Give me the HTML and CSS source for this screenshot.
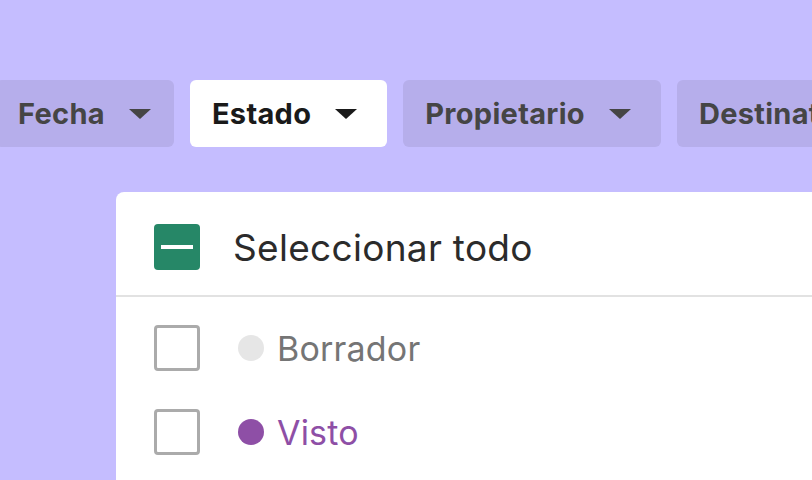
FILE: index.html
```html
<!DOCTYPE html>
<html lang="es">
<head>
<meta charset="utf-8">
<link rel="stylesheet" href="styles.css">
</head>
<body>
<div class="page">
  <div class="tabs">
    <div class="tab tab-first">Fecha<span class="caret"></span></div>
    <div class="tab active">Estado<span class="caret"></span></div>
    <div class="tab">Propietario<span class="caret"></span></div>
    <div class="tab">Destinatario<span class="caret"></span></div>
  </div>
  <div class="panel">
    <div class="head-row">
      <span class="check mixed"><span class="bar"></span></span>
      <span class="head-label">Seleccionar todo</span>
    </div>
    <div class="list">
      <div class="row">
        <span class="check"></span>
        <span class="dot draft"></span>
        <span class="label draft-text">Borrador</span>
      </div>
      <div class="row">
        <span class="check"></span>
        <span class="dot seen"></span>
        <span class="label seen-text">Visto</span>
      </div>
    </div>
  </div>
</div>
</body>
</html>
```
FILE: styles.css
```css
html, body {
  margin: 0;
  padding: 0;
}
body {
  width: 812px;
  height: 480px;
  overflow: hidden;
  background: #c5bdff;
  font-family: Inter, "Noto Sans", sans-serif;
}
.page {
  padding-top: 80px;
}
.tabs {
  display: flex;
  gap: 16px;
  margin-left: -4px;
  white-space: nowrap;
}
.tab {
  flex: none;
  display: flex;
  align-items: center;
  gap: 24px;
  height: 67px;
  box-sizing: border-box;
  padding: 0 30px 0 22px;
  border-radius: 6px;
  background: #b6aeeb;
  color: #454545;
  font-weight: 700;
  font-size: 29px;
  letter-spacing: 0.3px;
}
.tab-first {
  padding-right: 23px;
}
.tab.active {
  background: #ffffff;
  color: #1a1a1a;
}
.caret {
  width: 0;
  height: 0;
  border-left: 11px solid transparent;
  border-right: 11px solid transparent;
  border-top: 10px solid currentColor;
  margin-top: 1px;
}
.panel {
  margin-top: 45px;
  margin-left: 116px;
  width: 800px;
  height: 400px;
  background: #ffffff;
  border-radius: 8px 0 0 0;
}
.head-row {
  display: flex;
  align-items: center;
  gap: 33px;
  padding: 32px 0 25px 38px;
  border-bottom: 2px solid #e2e2e2;
}
.check {
  flex: none;
  width: 46px;
  height: 46px;
  box-sizing: border-box;
  border: 3px solid #ababab;
  border-radius: 4px;
  display: flex;
  align-items: center;
  justify-content: center;
}
.check.mixed {
  background: #268767;
  border: none;
}
.bar {
  width: 32px;
  height: 4px;
  background: #ffffff;
}
.head-label {
  font-size: 37px;
  letter-spacing: 0.3px;
  color: #2b2b2b;
}
.list {
  display: flex;
  flex-direction: column;
  gap: 38px;
  padding: 28px 0 0 38px;
}
.row {
  display: flex;
  align-items: center;
}
.dot {
  flex: none;
  width: 26px;
  height: 26px;
  border-radius: 50%;
  margin-left: 38px;
  margin-right: 13px;
}
.dot.draft { background: #e6e6e6; }
.dot.seen { background: #8e4fa6; }
.label {
  font-size: 34px;
  letter-spacing: 0.2px;
}
.draft-text { color: #757575; }
.seen-text { color: #8e4fa6; }
```
